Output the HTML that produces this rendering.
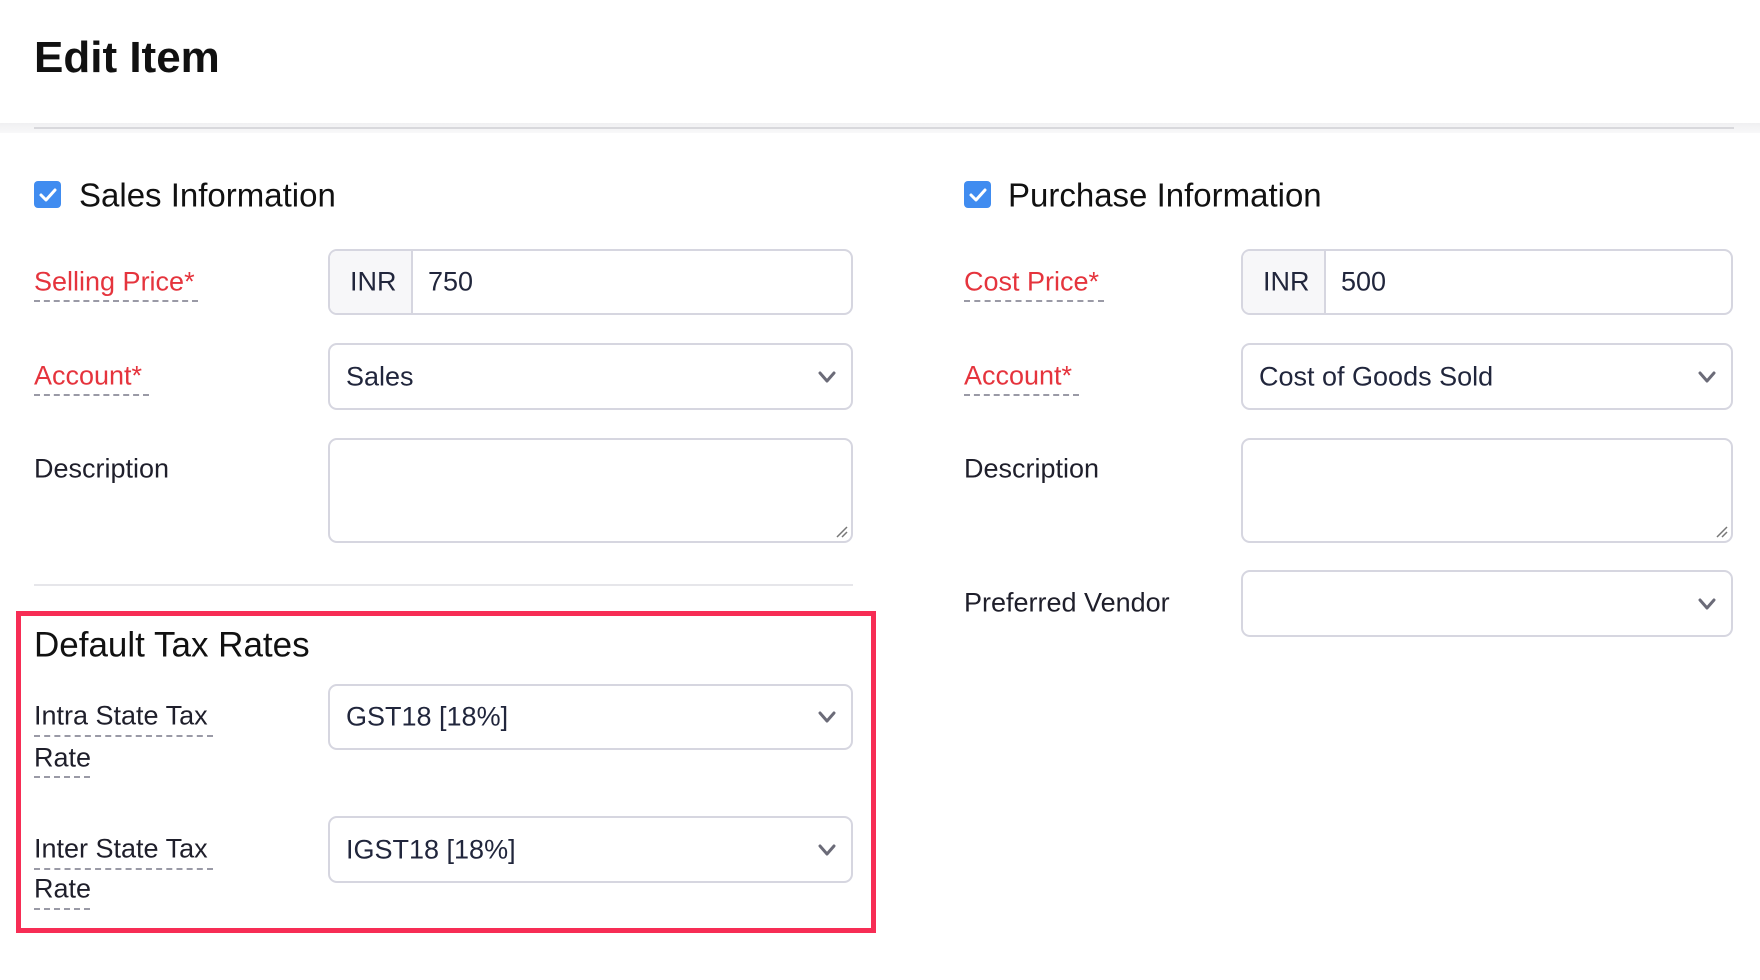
<!DOCTYPE html>
<html><head><meta charset="utf-8"><style>
*{box-sizing:border-box;margin:0;padding:0}
body{width:1760px;height:980px;background:#fff;font-family:"Liberation Sans",sans-serif;color:#21263c;position:relative;overflow:hidden}
.a{position:absolute}
.t{position:absolute;white-space:nowrap;line-height:1}
.lbl{font-size:27px;color:#1f1f2b;transform:translateY(-50%)}
.red{color:#e5343d}
.dash{position:absolute;border-top:2px dashed #9a9aa6;height:0}
.box{position:absolute;border:2px solid #d6d6e0;border-radius:9px;background:#fff}
.in{position:absolute;font-size:27px;color:#21263c;top:50%;transform:translateY(-50%);white-space:nowrap}
.chev{position:absolute;right:14px;top:50%;margin-top:-9px}
.cb{position:absolute;width:27px;height:27px;background:#408cf0;border-radius:4px}
.h2{font-size:33px;color:#111;transform:translateY(-50%)}
</style></head><body>
<div class="t" style="left:34px;top:58px;transform:translateY(-50%);font-size:44px;font-weight:700;color:#111">Edit Item</div>
<div class="a" style="left:0;top:123px;width:1760px;height:10px;background:linear-gradient(#f0f0f2,#f8f8f9)"></div>
<div class="a" style="left:34px;top:127px;width:1700px;height:2px;background:#d8d8dc"></div>

<div class="cb" style="left:34px;top:181px"><svg width="27" height="27"><path d="M7 14l5 5 9-10" stroke="#fff" stroke-width="3" fill="none" stroke-linecap="round" stroke-linejoin="round"/></svg></div>
<div class="t h2" style="left:79px;top:195px">Sales Information</div>

<div class="t lbl red" style="left:34px;top:282px">Selling Price*</div>
<div class="dash" style="left:34px;top:300px;width:164px"></div>
<div class="box" style="left:328px;top:249px;width:525px;height:66px;overflow:hidden">
 <div class="a" style="left:0;top:0;width:83px;height:100%;background:#f7f7f9;border-right:2px solid #d6d6e0"></div>
 <div class="in" style="left:20px">INR</div><div class="in" style="left:98px">750</div></div>

<div class="t lbl red" style="left:34px;top:376px">Account*</div>
<div class="dash" style="left:34px;top:394px;width:115px"></div>
<div class="box" style="left:328px;top:343px;width:525px;height:67px"><div class="in" style="left:16px">Sales</div>
<svg class="chev" width="20" height="18"><path d="M3 5l7 8 7-8" stroke="#6b6b78" stroke-width="3" fill="none" stroke-linecap="round" stroke-linejoin="round"/></svg></div>

<div class="t lbl" style="left:34px;top:469px">Description</div>
<div class="box" style="left:328px;top:438px;width:525px;height:105px"><svg class="a" style="right:2px;bottom:2px" width="14" height="14"><path d="M2 12L12 2M7 12l5-5" stroke="#777" stroke-width="1.5"/></svg></div>

<div class="a" style="left:34px;top:584px;width:819px;height:2px;background:#e6e6ea"></div>

<div class="a" style="left:16px;top:611px;width:860px;height:322px;border:5px solid #f72d55"></div>
<div class="t h2" style="left:34px;top:645px;font-size:35px">Default Tax Rates</div>
<div class="t lbl" style="left:34px;top:716px">Intra State Tax</div>
<div class="dash" style="left:34px;top:735px;width:179px"></div>
<div class="t lbl" style="left:34px;top:758px">Rate</div>
<div class="dash" style="left:34px;top:776px;width:56px"></div>
<div class="box" style="left:328px;top:684px;width:525px;height:66px"><div class="in" style="left:16px">GST18 [18%]</div>
<svg class="chev" width="20" height="18"><path d="M3 5l7 8 7-8" stroke="#6b6b78" stroke-width="3" fill="none" stroke-linecap="round" stroke-linejoin="round"/></svg></div>
<div class="t lbl" style="left:34px;top:849px">Inter State Tax</div>
<div class="dash" style="left:34px;top:868px;width:179px"></div>
<div class="t lbl" style="left:34px;top:889px">Rate</div>
<div class="dash" style="left:34px;top:908px;width:56px"></div>
<div class="box" style="left:328px;top:816px;width:525px;height:67px"><div class="in" style="left:16px">IGST18 [18%]</div>
<svg class="chev" width="20" height="18"><path d="M3 5l7 8 7-8" stroke="#6b6b78" stroke-width="3" fill="none" stroke-linecap="round" stroke-linejoin="round"/></svg></div>

<div class="cb" style="left:964px;top:181px"><svg width="27" height="27"><path d="M7 14l5 5 9-10" stroke="#fff" stroke-width="3" fill="none" stroke-linecap="round" stroke-linejoin="round"/></svg></div>
<div class="t h2" style="left:1008px;top:195px">Purchase Information</div>

<div class="t lbl red" style="left:964px;top:282px">Cost Price*</div>
<div class="dash" style="left:964px;top:300px;width:140px"></div>
<div class="box" style="left:1241px;top:249px;width:492px;height:66px;overflow:hidden">
 <div class="a" style="left:0;top:0;width:83px;height:100%;background:#f7f7f9;border-right:2px solid #d6d6e0"></div>
 <div class="in" style="left:20px">INR</div><div class="in" style="left:98px">500</div></div>

<div class="t lbl red" style="left:964px;top:376px">Account*</div>
<div class="dash" style="left:964px;top:394px;width:115px"></div>
<div class="box" style="left:1241px;top:343px;width:492px;height:67px"><div class="in" style="left:16px">Cost of Goods Sold</div>
<svg class="chev" width="20" height="18"><path d="M3 5l7 8 7-8" stroke="#6b6b78" stroke-width="3" fill="none" stroke-linecap="round" stroke-linejoin="round"/></svg></div>

<div class="t lbl" style="left:964px;top:469px">Description</div>
<div class="box" style="left:1241px;top:438px;width:492px;height:105px"><svg class="a" style="right:2px;bottom:2px" width="14" height="14"><path d="M2 12L12 2M7 12l5-5" stroke="#777" stroke-width="1.5"/></svg></div>

<div class="t lbl" style="left:964px;top:603px">Preferred Vendor</div>
<div class="box" style="left:1241px;top:570px;width:492px;height:67px">
<svg class="chev" width="20" height="18"><path d="M3 5l7 8 7-8" stroke="#6b6b78" stroke-width="3" fill="none" stroke-linecap="round" stroke-linejoin="round"/></svg></div>
</body></html>
